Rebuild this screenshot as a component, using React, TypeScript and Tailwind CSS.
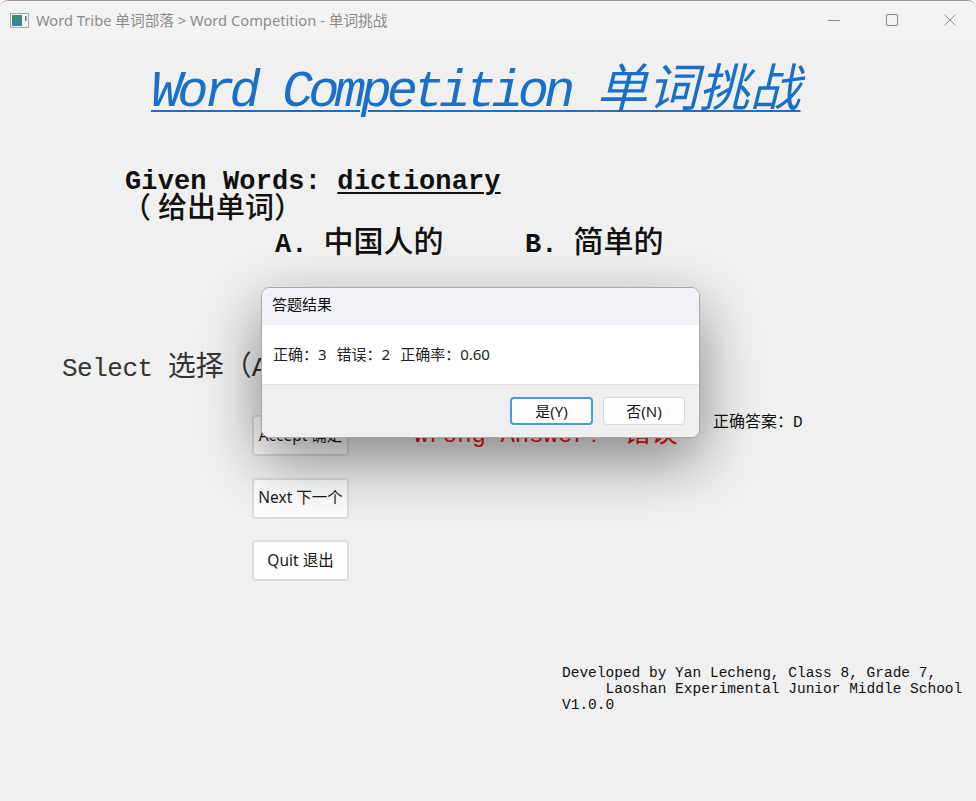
import React from 'react';

const mono = { fontFamily: '"Liberation Mono", "Noto Sans CJK SC", monospace' };

const QtButton = ({ label }: { label: string }) => (
  <button className="h-[41px] w-[97px] rounded-[4px] border-2 border-[#dcdcdc] bg-[#fdfdfd] text-[15.5px] text-[#1a1a1a] font-['Noto_Sans','Noto_Sans_CJK_SC',sans-serif] whitespace-nowrap">
    {label}
  </button>
);

const DialogButton = ({ label, primary }: { label: string; primary?: boolean }) => (
  <button
    className={
      primary
        ? 'h-[28px] w-[83px] rounded-[4px] border-2 border-[#4a9ae0] bg-[#fdfdfd] text-[15px] text-[#1a1a1a]'
        : 'h-[28px] w-[82px] rounded-[4px] border border-[#dadada] bg-[#fdfdfd] text-[15px] text-[#1a1a1a]'
    }
  >
    {label}
  </button>
);

export default function App() {
  return (
    <div className="relative h-[801px] w-[976px] overflow-hidden bg-white">
      <div className="flex h-full flex-col overflow-hidden rounded-t-[8px] border-t border-[#9a9a9a] bg-[#f0f0f0]">
        {/* Title bar */}
        <div className="flex h-[39px] shrink-0 items-center bg-[#f3f3f3] pb-[1px] pl-[10px] font-['Noto_Sans','Noto_Sans_CJK_SC',sans-serif]">
          <svg width="19" height="15" viewBox="0 0 19 15">
            <defs>
              <linearGradient id="appIcon" x1="0" y1="0" x2="0" y2="1">
                <stop offset="0" stopColor="#3f8f6a" />
                <stop offset="1" stopColor="#3a7fa8" />
              </linearGradient>
            </defs>
            <rect x="0.5" y="0.5" width="18" height="14" fill="#f4f4f4" stroke="#a8a8a8" />
            <rect x="2" y="2" width="10" height="11" fill="url(#appIcon)" />
            <rect x="15" y="3" width="1.5" height="5" fill="#3f8a78" />
          </svg>
          <span className="ml-[7px] text-[14.7px] text-[#8c8c8c]">Word Tribe 单词部落 &gt; Word Competition - 单词挑战</span>
          <div className="ml-auto -mr-[3px] flex items-center">
            <div className="flex w-[58px] justify-center">
              <svg width="12" height="12" viewBox="0 0 12 12">
                <path d="M0 6.5h12" stroke="#8a8a8a" strokeWidth="1" />
              </svg>
            </div>
            <div className="flex w-[58px] justify-center">
              <svg width="12" height="12" viewBox="0 0 12 12">
                <rect x="0.5" y="0.5" width="11" height="11" rx="1.5" fill="none" stroke="#8a8a8a" />
              </svg>
            </div>
            <div className="flex w-[58px] justify-center">
              <svg width="12" height="12" viewBox="0 0 12 12">
                <path d="M0.5 0.5l11 11M11.5 0.5l-11 11" stroke="#8a8a8a" strokeWidth="1" />
              </svg>
            </div>
          </div>
        </div>

        {/* Body */}
        <div className="flex-1" style={mono}>
          <h1 className="mt-[17px] ml-[151px] text-[52px] leading-[54px] font-normal whitespace-nowrap text-[#1a6fc8] italic underline decoration-2 underline-offset-[4px]">
            <span className="tracking-[-5px]">Word Competition </span>
            <span className="font-['Noto_Sans_CJK_SC',sans-serif] text-[51px]">单词挑战</span>
          </h1>

          <div className="mt-[49px] ml-[125px] text-[27px] leading-[27px] font-bold tracking-[0.13px] text-[#111]">
            Given Words: <span className="underline underline-offset-[3px]">dictionary</span>
          </div>
          <div className="mt-[1px] ml-[122px] text-[29px] leading-[28px] font-medium text-[#111]">
            <span>（</span>
            <span className="ml-[7px]">给出单词）</span>
          </div>
          <div className="mt-[2px] ml-[275px] flex text-[27px] leading-[34px] font-bold text-[#111]">
            <span className="w-[250px]">
              A. <span className="text-[30px] font-medium">中国人的</span>
            </span>
            <span>
              B. <span className="text-[30px] font-medium">简单的</span>
            </span>
          </div>

          <div className="mt-[89px] ml-[62px] text-[26px] leading-[36px] tracking-[-0.5px] text-[#333]">
            Select <span className="text-[28px] tracking-[0px]">选择（A</span>
          </div>

          <div className="mt-[28px] ml-[252px] flex">
            <div className="flex flex-col gap-[21.5px]">
              <QtButton label="Accept 确定" />
              <QtButton label="Next 下一个" />
              <QtButton label="Quit 退出" />
            </div>
            <div className="mt-[2px] ml-[65px] w-[300px] text-[24px] leading-[36px] whitespace-nowrap text-[#ee1111]">
              Wrong Answer! <span className="ml-[8px] text-[27px]">错误</span>
            </div>
            <div className="-mt-[3px] -ml-[1px] text-[16px] leading-[22px] whitespace-nowrap text-[#111]">正确答案：D</div>
          </div>

          <div className="mt-[84px] ml-[562px] text-[14.5px] leading-[16px] whitespace-pre text-[#111]">
            {'Developed by Yan Lecheng, Class 8, Grade 7,\n     Laoshan Experimental Junior Middle School\nV1.0.0'}
          </div>
        </div>
      </div>

      {/* Message box */}
      <div className="absolute top-[287px] left-[261px] flex h-[151px] w-[439px] flex-col overflow-hidden rounded-[9px] border border-[#a8a8a8] bg-white font-['Noto_Sans','Noto_Sans_CJK_SC',sans-serif] shadow-[0_22px_60px_rgba(0,0,0,0.45)]">
        <div className="flex h-[37px] shrink-0 items-center bg-[#f0f2f7] pb-[4px] pl-[10px] text-[15px] text-[#111]">答题结果</div>
        <div className="flex h-[60px] shrink-0 items-center gap-[10px] border-b border-[#e0e0e0] bg-white pl-[11px] text-[15px] whitespace-pre text-[#222]">
          <span>正确：3</span>
          <span>错误：2</span>
          <span>正确率：0.60</span>
        </div>
        <div className="flex flex-1 items-center justify-end gap-[10px] bg-[#efefef] pr-[14px]">
          <DialogButton label="是(Y)" primary />
          <DialogButton label="否(N)" />
        </div>
      </div>
    </div>
  );
}
